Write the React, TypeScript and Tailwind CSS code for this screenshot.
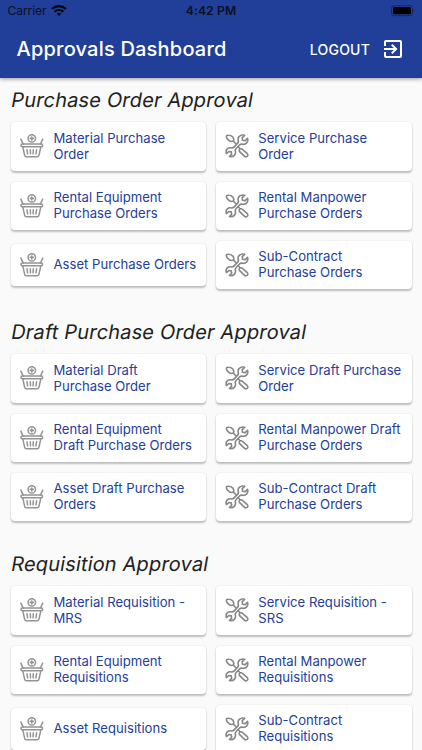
const SECTIONS = [
  {
    title: 'Purchase Order Approval',
    items: [
      ['Material Purchase', 'Order'],
      ['Service Purchase', 'Order'],
      ['Rental Equipment', 'Purchase Orders'],
      ['Rental Manpower', 'Purchase Orders'],
      ['Asset Purchase Orders'],
      ['Sub-Contract', 'Purchase Orders'],
    ],
  },
  {
    title: 'Draft Purchase Order Approval',
    items: [
      ['Material Draft', 'Purchase Order'],
      ['Service Draft Purchase', 'Order'],
      ['Rental Equipment', 'Draft Purchase Orders'],
      ['Rental Manpower Draft', 'Purchase Orders'],
      ['Asset Draft Purchase', 'Orders'],
      ['Sub-Contract Draft', 'Purchase Orders'],
    ],
  },
  {
    title: 'Requisition Approval',
    items: [
      ['Material Requisition -', 'MRS'],
      ['Service Requisition -', 'SRS'],
      ['Rental Equipment', 'Requisitions'],
      ['Rental Manpower', 'Requisitions'],
      ['Asset Requisitions'],
      ['Sub-Contract', 'Requisitions'],
    ],
  },
];

function BasketIcon() {
  return (
    <svg className="h-6 w-6 shrink-0" viewBox="0 0 24 24" fill="none" stroke="#949494" strokeWidth="1.5" strokeLinecap="round" strokeLinejoin="round">
      <circle cx="11.8" cy="4.4" r="3.7" />
      <path d="M11.8 3v2.8M10.4 4.4h2.8" strokeWidth="1.7" />
      <path d="M.9 5.1 3.1 10M22.7 5.1 20.5 10" />
      <rect x="1" y="10" width="21.6" height="2.7" rx="1.2" />
      <path d="m2.8 12.8 1.8 8.4c.2 1 .9 1.6 1.9 1.6h10.6c1 0 1.7-.6 1.9-1.6l1.8-8.4" />
      <path d="m7 15.7.6 4.2M10.3 15.7l.2 4.2M13.3 15.7l-.2 4.2M16.6 15.7l-.6 4.2" />
    </svg>
  );
}

function ToolsIcon() {
  return (
    <svg className="h-6 w-6 shrink-0" viewBox="0 0 24 24" fill="none" stroke="#868686" strokeWidth="1.6" strokeLinecap="round" strokeLinejoin="round">
      <path d="M1.3 2.7c0-1 .5-1.5 1.5-1.5 2.3 0 4 .5 5 1.7 1 1.2 1.2 2.8.7 4.2-1.4.5-3.3.4-4.6-.8C2.4 5.4 1.5 4.6 1.3 2.7ZM8.5 7.2l2.7 2.8" />
      <path d="M19.6 1.3c-2.1-.7-4.1-.2-5.3 1.1-1.2 1.3-1.5 3.1-.8 4.7-.1 1.2-.5 1.8-1.3 2.6l-3 3.2c-.7.8-1.4 1.1-2.6 1.1-1.6-.4-3.1-.2-4.3.9-1.2 1.2-1.5 3-.9 4.7l2.4-2.1 2.5.3.3 2.6-2.1 2.1c1.8.5 3.6.1 4.8-1.1 1.2-1.3 1.5-3 .9-4.6 0-1.1.4-1.8 1.2-2.6l2.9-3c.8-.8 1.5-1.2 2.6-1.1 1.6.5 3.4.1 4.6-1 1.2-1.2 1.6-3.1 1-4.8l-2.3 2.3-2.7-.3-.3-2.7 2.4-2.3Z" />
      <path d="M14.4 17.4c-.7-1.8.8-3.3 2.6-2.4l4.8 4.2c1.2 1.1 1.3 2.3.5 3.1s-2.1.8-3.3-.4l-4.6-4.5ZM13.2 12.8l1.8 2" />
    </svg>
  );
}

function StatusBar() {
  return (
    <div className="grid h-[22px] grid-cols-3 items-center px-[7.5px] text-[12.2px] leading-[22px] text-[#0b1024]">
      <div className="flex items-center gap-[5px]">
        <span className="tracking-[-0.15px]">Carrier</span>
        <svg className="-mt-px h-[11px] w-4" viewBox="0 0 16 11" fill="none" stroke="#05070f" strokeWidth="2.2">
          <path d="M1 4C5 .1 11 .1 15 4M3.6 6.8c2.5-2.4 6.3-2.4 8.8 0" />
          <path d="M5.6 8.6c1.3-1.2 3.5-1.2 4.8 0L8 11Z" fill="#05070f" stroke="none" />
        </svg>
      </div>
      <span className="text-center font-semibold tracking-[0.1px]">4:42 PM</span>
      <svg className="h-3 w-6 justify-self-end" viewBox="0 0 24 12">
        <rect x=".5" y=".7" width="21" height="10" rx="2.8" fill="none" stroke="#16265f" />
        <rect x="2" y="2.1" width="18" height="7.2" rx="1.5" fill="#000" />
        <path d="M22.5 4v3.5c1.2-.5 1.2-3 0-3.5Z" fill="#16265f" />
      </svg>
    </div>
  );
}

function Card({ lines, tools }: { lines: string[]; tools: boolean }) {
  return (
    <div className="flex items-center gap-[10px] rounded-[4px] bg-white pt-[7.5px] pb-[9px] pl-[9px] text-[13.1px] leading-[16px] tracking-[0.02px] text-[#24409a] shadow-[0_1.5px_2px_rgba(0,0,0,0.24),0_0_2px_rgba(0,0,0,0.07)] even:gap-[9.3px]">
      <div className="flex h-[26px] items-center pt-px">{tools ? <ToolsIcon /> : <BasketIcon />}</div>
      <div>
        {lines.map((line) => (
          <div key={line} className="whitespace-nowrap">{line}</div>
        ))}
      </div>
    </div>
  );
}

export default function App() {
  return (
    <div className="h-[750px] overflow-hidden bg-[#fafafa] font-['Inter','Liberation_Sans',sans-serif]">
      <header className="relative h-[77.5px] bg-[#213f99] shadow-[0_1px_4px_rgba(0,0,0,0.4)]">
        <StatusBar />
        <div className="flex h-[54px] items-center pr-[17px] pl-[16.6px] text-white">
          <h1 className="text-[20px] font-medium tracking-[0.2px]">Approvals Dashboard</h1>
          <span className="ml-auto text-[14px] font-medium tracking-[0.2px]">LOGOUT</span>
          <svg className="ml-[11px] h-6 w-6" viewBox="0 0 24 24" fill="#fff">
            <path d="M10.09 15.59 11.5 17l5-5-5-5-1.41 1.41L12.67 11H3v2h9.67l-2.58 2.59ZM19 3H5a2 2 0 0 0-2 2v4h2V5h14v14H5v-4H3v4a2 2 0 0 0 2 2h14a2 2 0 0 0 2-2V5a2 2 0 0 0-2-2Z" />
          </svg>
        </div>
      </header>
      <main className="px-[10.5px]">
        {SECTIONS.map((section) => (
          <section key={section.title} className="h-[232px] pt-[8.6px]">
            <h2 className="-ml-[2px] h-[28px] origin-bottom-left -skew-x-[10deg] text-[20px] leading-[28px] tracking-[0.17px] whitespace-nowrap text-[#212121]">
              {section.title}
            </h2>
            <div className="mt-[8.4px] grid auto-rows-[48.5px] grid-cols-2 items-center gap-x-[10px] gap-y-[10.6px]">
              {section.items.map((lines, index) => (
                <Card key={lines.join(' ')} lines={lines} tools={index % 2 === 1} />
              ))}
            </div>
          </section>
        ))}
      </main>
    </div>
  );
}
